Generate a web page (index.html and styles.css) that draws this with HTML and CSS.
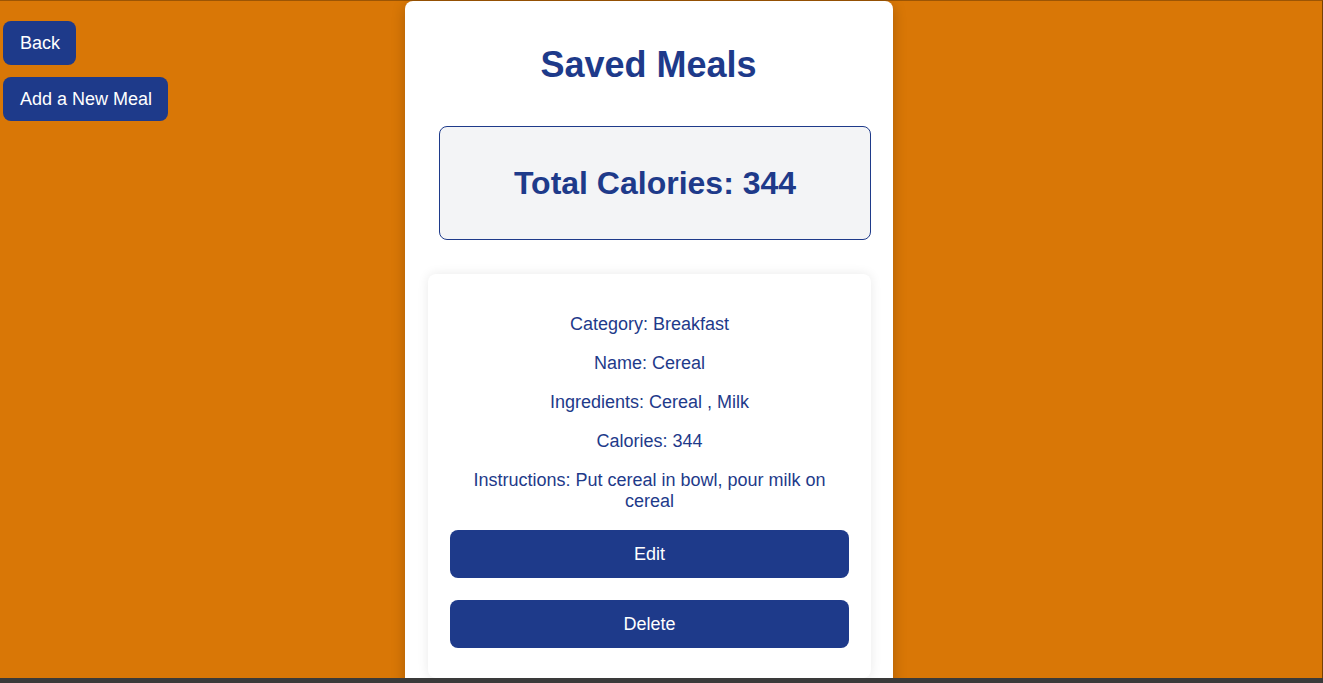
FILE: index.html
```html
<!DOCTYPE html>
<html lang="en">
<head>
<meta charset="utf-8">
<title>Saved Meals</title>
<link rel="stylesheet" href="styles.css">
</head>
<body>
<div class="frame">
  <div class="layout">
    <nav class="side">
      <button class="nav-btn">Back</button>
      <button class="nav-btn">Add a New Meal</button>
    </nav>
    <main class="panel">
      <h1 class="title">Saved Meals</h1>
      <section class="total">
        <h2 class="total-text">Total Calories: 344</h2>
      </section>
      <article class="meal">
        <p class="meal-line">Category: Breakfast</p>
        <p class="meal-line">Name: Cereal</p>
        <p class="meal-line">Ingredients: Cereal , Milk</p>
        <p class="meal-line">Calories: 344</p>
        <p class="meal-line">Instructions: Put cereal in bowl, pour milk on cereal</p>
        <button class="act-btn act-edit">Edit</button>
        <button class="act-btn act-delete">Delete</button>
      </article>
    </main>
  </div>
</div>
</body>
</html>
```

FILE: styles.css
```css
* { box-sizing: border-box; }

html {
  background: #3a3a3a;
  height: 100%;
}

body {
  margin: 0;
  height: 683px;
  overflow: hidden;
  font-family: "Liberation Sans", Arial, sans-serif;
}

.frame {
  height: 678px;
  background: #d97706;
  overflow: hidden;
  position: relative;
}

.frame::after {
  content: "";
  position: absolute;
  inset: 0;
  border-top: 1px solid rgba(0, 0, 0, 0.28);
  border-right: 1px solid rgba(0, 0, 0, 0.45);
  pointer-events: none;
}

.layout {
  display: flex;
  align-items: flex-start;
  padding-top: 1px;
}

.side {
  width: 405px;
  flex: none;
  display: flex;
  flex-direction: column;
  align-items: flex-start;
  gap: 12px;
  padding: 20px 0 0 3px;
}

.nav-btn {
  font-family: inherit;
  font-size: 18px;
  line-height: 21px;
  color: #ffffff;
  background: #1e3a8a;
  border: none;
  border-radius: 8px;
  height: 44px;
  padding: 0 16px 0 17px;
}

.panel {
  width: 488px;
  flex: none;
  background: #ffffff;
  border-radius: 8px;
  box-shadow: 0 4px 14px rgba(0, 0, 0, 0.22);
  padding: 21px 22px 40px 23px;
  min-height: 720px;
}

.title {
  margin: 22px 0 24px -2px;
  text-align: center;
  font-size: 36px;
  line-height: 41px;
  font-weight: 700;
  color: #1e3a8a;
}

.total {
  margin: 41px 0 0 11px;
  width: 432px;
  height: 114px;
  border: 1px solid #1e3a8a;
  border-radius: 8px;
  background: #f3f4f6;
  display: flex;
  align-items: center;
  justify-content: center;
}

.total-text {
  margin: 0;
  font-size: 32px;
  line-height: 37px;
  font-weight: 700;
  color: #1e3a8a;
}

.meal {
  margin-top: 34px;
  background: #ffffff;
  border-radius: 8px;
  box-shadow: 0 0 12px rgba(0, 0, 0, 0.09);
  padding: 22px 22px 30px 22px;
}

.meal-line {
  margin: 18px 0;
  text-align: center;
  font-size: 18px;
  line-height: 21px;
  color: #1e3a8a;
}

.act-btn {
  display: block;
  width: 100%;
  height: 48px;
  font-family: inherit;
  font-size: 18px;
  color: #ffffff;
  background: #1e3a8a;
  border: none;
  border-radius: 8px;
}

.act-edit { margin-top: 18px; }
.act-delete { margin-top: 22px; }
```
